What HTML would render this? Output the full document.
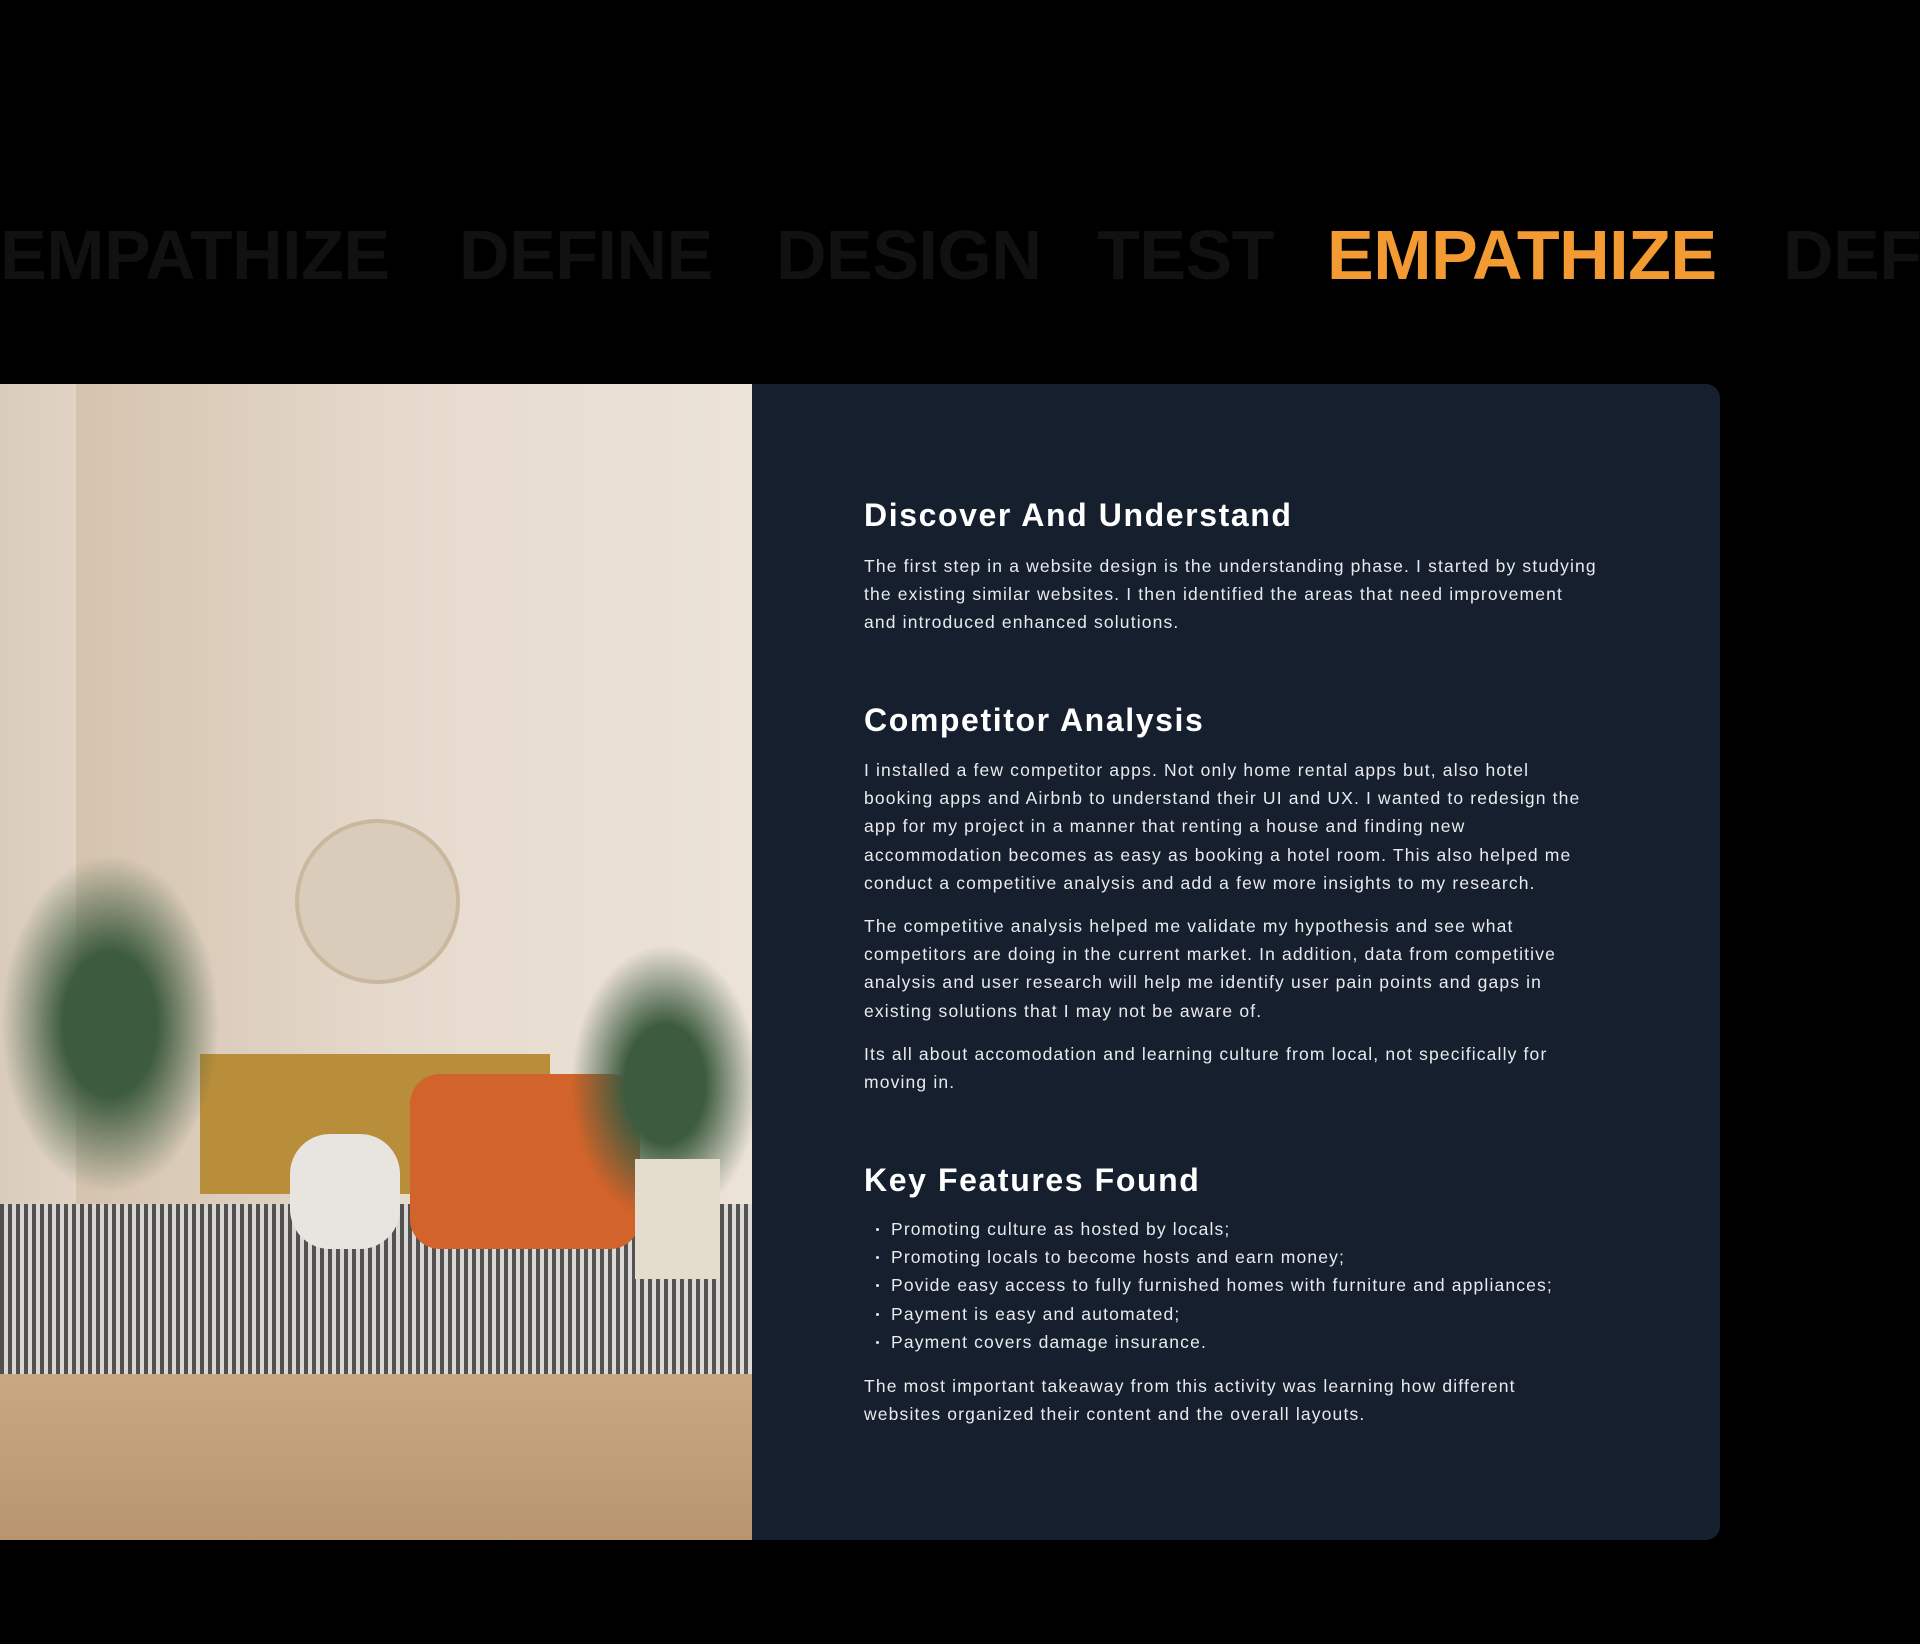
<!DOCTYPE html>
<html><head><meta charset="utf-8"><style>
*{margin:0;padding:0;box-sizing:border-box}
html,body{width:1920px;height:1644px;overflow:hidden}
body{background:#000;position:relative;font-family:"Liberation Sans",sans-serif}
.wrap{position:absolute;left:0;top:0;width:1920px;height:1644px;overflow:hidden}
.w{position:absolute;top:214px;font-size:70px;font-weight:700;color:#111;line-height:82px;white-space:nowrap;letter-spacing:-0.5px}
.card{position:absolute;left:752px;top:384px;width:968px;height:1156px;background:#161f2d;border-radius:0 14px 14px 0}
.img{position:absolute;left:0;top:384px;width:752px;height:1156px;overflow:hidden;background:linear-gradient(90deg,#d9ccbd 0,#e0d3c3 76px,#d4c3ae 76px,#e6dacd 400px,#ece3d8 752px)}
.t{position:absolute;left:864px;color:#fff;white-space:nowrap}
h2{font-size:32px;font-weight:700;line-height:40px;letter-spacing:1.6px}
p,li{font-size:17.5px;line-height:28.2px;color:#e8eaee;letter-spacing:1.15px}
ul{list-style:none}
li{position:relative;padding-left:27px;height:28.2px}
li:before{content:"";position:absolute;left:12px;top:13px;width:3px;height:3px;border-radius:50%;background:#e8eaee}
</style></head><body><div class="wrap">
<div class="w" style="left:0">EMPATHIZE</div>
<div class="w" style="left:459px">DEFINE</div>
<div class="w" style="left:776px">DESIGN</div>
<div class="w" style="left:1097px">TEST</div>
<div class="w" style="left:1327px;color:#f39a33">EMPATHIZE</div>
<div class="w" style="left:1783px">DEF</div>

<div class="img">
<div style="position:absolute;left:0;top:990px;width:752px;height:166px;background:linear-gradient(180deg,#c8a883,#b89570)"></div>
<div style="position:absolute;left:0;top:820px;width:752px;height:170px;background:repeating-linear-gradient(90deg,#3a3a3a 0 4px,#d8d8d8 4px 8px);opacity:.85"></div>
<div style="position:absolute;left:200px;top:670px;width:350px;height:140px;background:#b98e3a"></div>
<div style="position:absolute;left:295px;top:435px;width:165px;height:165px;border-radius:50%;border:4px solid #c9b79e;background:#d9ccbb"></div>
<div style="position:absolute;left:410px;top:690px;width:230px;height:175px;background:#d2632a;border-radius:30px"></div>
<div style="position:absolute;left:290px;top:750px;width:110px;height:115px;background:#e8e4df;border-radius:40px"></div>
<div style="position:absolute;left:0;top:470px;width:220px;height:340px;background:radial-gradient(ellipse,#3d5b3f 30%,transparent 70%)"></div>
<div style="position:absolute;left:570px;top:560px;width:190px;height:280px;background:radial-gradient(ellipse,#3d5b3f 30%,transparent 70%)"></div>
<div style="position:absolute;left:635px;top:775px;width:85px;height:120px;background:#e4dccd"></div>
</div>

<div class="card"></div>
<div class="t" style="top:495px"><h2>Discover And Understand</h2></div>
<div class="t" style="top:552px"><p>The first step in a website design is the understanding phase. I started by studying<br>the existing similar websites. I then identified the areas that need improvement<br>and introduced enhanced solutions.</p></div>
<div class="t" style="top:700px"><h2>Competitor Analysis</h2></div>
<div class="t" style="top:756px"><p>I installed a few competitor apps. Not only home rental apps but, also hotel<br>booking apps and Airbnb to understand their UI and UX. I wanted to redesign the<br>app for my project in a manner that renting a house and finding new<br>accommodation becomes as easy as booking a hotel room. This also helped me<br>conduct a competitive analysis and add a few more insights to my research.</p></div>
<div class="t" style="top:912px"><p>The competitive analysis helped me validate my hypothesis and see what<br>competitors are doing in the current market. In addition, data from competitive<br>analysis and user research will help me identify user pain points and gaps in<br>existing solutions that I may not be aware of.</p></div>
<div class="t" style="top:1040px"><p>Its all about accomodation and learning culture from local, not specifically for<br>moving in.</p></div>
<div class="t" style="top:1160px"><h2>Key Features Found</h2></div>
<div class="t" style="top:1215px"><ul>
<li>Promoting culture as hosted by locals;</li>
<li>Promoting locals to become hosts and earn money;</li>
<li>Povide easy access to fully furnished homes with furniture and appliances;</li>
<li>Payment is easy and automated;</li>
<li>Payment covers damage insurance.</li></ul></div>
<div class="t" style="top:1372px"><p>The most important takeaway from this activity was learning how different<br>websites organized their content and the overall layouts.</p></div>
</div></body></html>
